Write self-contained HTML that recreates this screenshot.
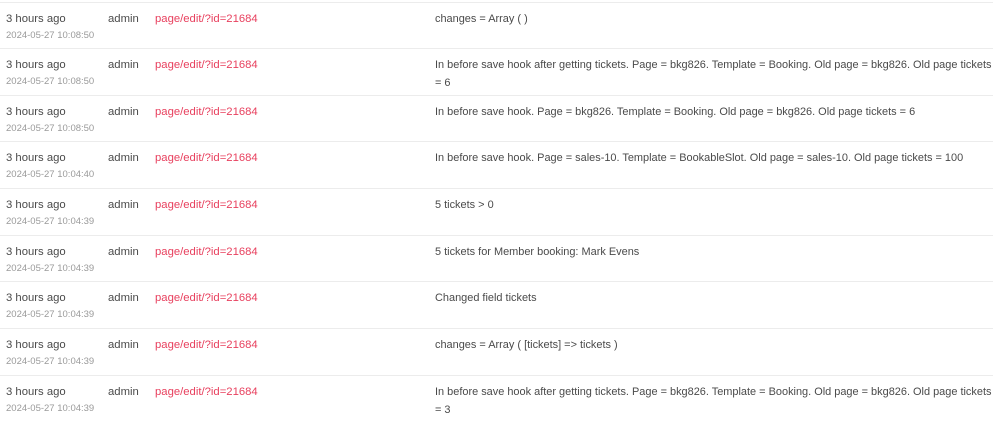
<!DOCTYPE html>
<html><head><meta charset="utf-8"><style>
body{margin:0;background:#fff;font-family:"Liberation Sans",Arial,sans-serif;color:#4a4a4a;width:1000px;height:413px;overflow:hidden}
.r{position:absolute;left:0;width:993px;height:46px;border-top:1px solid #ececec}
.t{position:absolute;left:6px;top:10px;font-size:11.3px;white-space:nowrap}
.d{position:absolute;left:6px;top:27px;font-size:9.5px;color:#9a9a9a;white-space:nowrap}
.u{position:absolute;left:108px;top:10px;font-size:11.3px}
.l{position:absolute;left:155px;top:10px;font-size:11.3px;color:#e8405e}
.m{position:absolute;left:435px;top:7px;font-size:10.95px;line-height:18px;white-space:nowrap}
</style></head><body>
<div class="r" style="top:2px"><div class="t">3 hours ago</div><div class="d">2024-05-27 10:08:50</div><div class="u">admin</div><div class="l">page/edit/?id=21684</div><div class="m">changes = Array ( )</div></div>
<div class="r" style="top:48px"><div class="t">3 hours ago</div><div class="d">2024-05-27 10:08:50</div><div class="u">admin</div><div class="l">page/edit/?id=21684</div><div class="m">In before save hook after getting tickets. Page = bkg826. Template = Booking. Old page = bkg826. Old page tickets<br>= 6</div></div>
<div class="r" style="top:95px"><div class="t">3 hours ago</div><div class="d">2024-05-27 10:08:50</div><div class="u">admin</div><div class="l">page/edit/?id=21684</div><div class="m">In before save hook. Page = bkg826. Template = Booking. Old page = bkg826. Old page tickets = 6</div></div>
<div class="r" style="top:141px"><div class="t">3 hours ago</div><div class="d">2024-05-27 10:04:40</div><div class="u">admin</div><div class="l">page/edit/?id=21684</div><div class="m">In before save hook. Page = sales-10. Template = BookableSlot. Old page = sales-10. Old page tickets = 100</div></div>
<div class="r" style="top:188px"><div class="t">3 hours ago</div><div class="d">2024-05-27 10:04:39</div><div class="u">admin</div><div class="l">page/edit/?id=21684</div><div class="m">5 tickets &gt; 0</div></div>
<div class="r" style="top:235px"><div class="t">3 hours ago</div><div class="d">2024-05-27 10:04:39</div><div class="u">admin</div><div class="l">page/edit/?id=21684</div><div class="m">5 tickets for Member booking: Mark Evens</div></div>
<div class="r" style="top:281px"><div class="t">3 hours ago</div><div class="d">2024-05-27 10:04:39</div><div class="u">admin</div><div class="l">page/edit/?id=21684</div><div class="m">Changed field tickets</div></div>
<div class="r" style="top:328px"><div class="t">3 hours ago</div><div class="d">2024-05-27 10:04:39</div><div class="u">admin</div><div class="l">page/edit/?id=21684</div><div class="m">changes = Array ( [tickets] =&gt; tickets )</div></div>
<div class="r" style="top:375px"><div class="t">3 hours ago</div><div class="d">2024-05-27 10:04:39</div><div class="u">admin</div><div class="l">page/edit/?id=21684</div><div class="m">In before save hook after getting tickets. Page = bkg826. Template = Booking. Old page = bkg826. Old page tickets<br>= 3</div></div>
</body></html>
